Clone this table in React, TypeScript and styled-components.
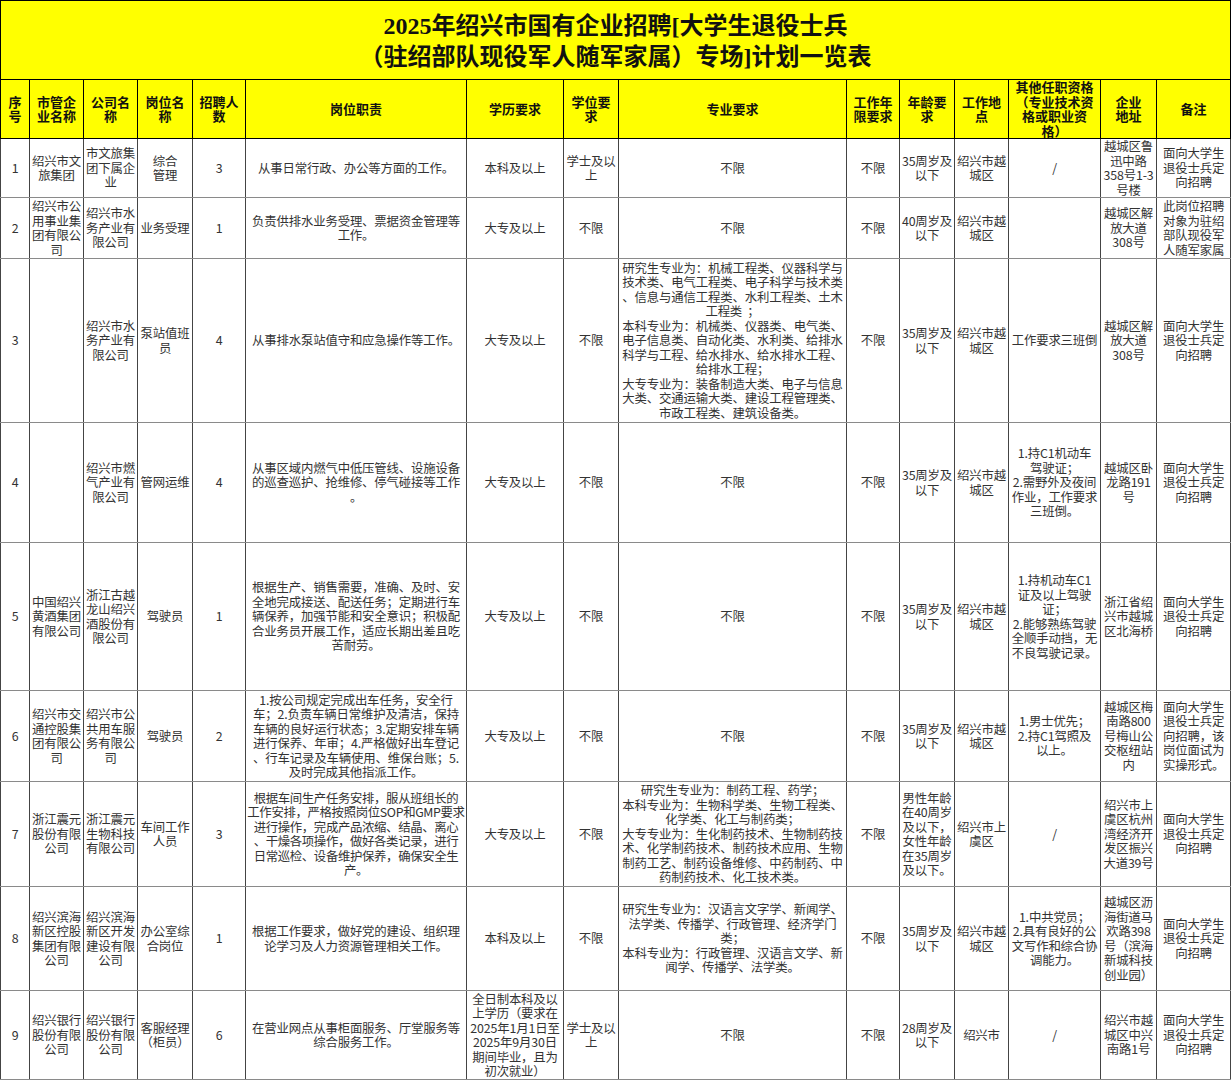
import React from "react";
import styled, { createGlobalStyle } from "styled-components";

const GlobalStyle = createGlobalStyle`
  html, body { margin: 0; padding: 0; background: #ffffff; }
  body { font-family: "Noto Sans CJK SC", "Noto Sans", sans-serif; }
`;

const Page = styled.div`
  width: 1232px;
  background: #ffffff;
`;

const Table = styled.table`
  width: 1230px;
  border-collapse: collapse;
  table-layout: fixed;
  font-family: "Noto Sans CJK SC", "Noto Sans", sans-serif;
`;

const TitleCell = styled.td`
  height: 75px;
  background: #ffff00;
  border: 1px solid #000;
  text-align: center;
  vertical-align: middle;
  font-family: "Liberation Serif", "Noto Sans CJK SC", serif;
  font-weight: 700;
  font-size: 24px;
  line-height: 31px;
  color: #111;
  padding: 3px 0 0 0;
`;

const HeadRow = styled.tr`
  height: 59px;
`;

const HeadCell = styled.th`
  background: #ffff00;
  border: 1px solid #000;
  text-align: center;
  vertical-align: middle;
  white-space: pre;
  font-weight: 700;
  font-size: 13px;
  line-height: 14.5px;
  color: #111;
  padding: 0;
`;

const BodyRow = styled.tr<{ $h: number }>`
  height: ${(p) => p.$h}px;
`;

const Cell = styled.td<{ $tight?: boolean }>`
  border-left: 1px solid #444;
  border-right: 1px solid #444;
  border-top: 1px solid #8a8a8a;
  border-bottom: 1px solid #8a8a8a;
  text-align: center;
  vertical-align: middle;
  white-space: pre;
  font-size: 12.4px;
  letter-spacing: ${(p) => (p.$tight ? "-0.35px" : "-0.15px")};
  line-height: 14.5px;
  color: #333;
  padding: 0;
  overflow: hidden;
`;

const widths = [29, 54, 54, 55, 53, 221, 97, 55, 228, 53, 55, 54, 92, 56, 74];

const headers = [
  "序\n号",
  "市管企\n业名称",
  "公司名\n称",
  "岗位名\n称",
  "招聘人\n数",
  "岗位职责",
  "学历要求",
  "学位要\n求",
  "专业要求",
  "工作年\n限要求",
  "年龄要\n求",
  "工作地\n点",
  "其他任职资格\n（专业技术资\n格或职业资\n格）",
  "企业\n地址",
  "备注",
];

const NOTE = "面向大学生\n退役士兵定\n向招聘";

const rows: { h: number; tight?: number; cells: string[] }[] = [
  {
    h: 59,
    cells: [
      "1",
      "绍兴市文\n旅集团",
      "市文旅集\n团下属企\n业",
      "综合\n管理",
      "3",
      "从事日常行政、办公等方面的工作。",
      "本科及以上",
      "学士及以\n上",
      "不限",
      "不限",
      "35周岁及\n以下",
      "绍兴市越\n城区",
      "/",
      "越城区鲁\n迅中路\n358号1-3\n号楼",
      NOTE,
    ],
  },
  {
    h: 61,
    cells: [
      "2",
      "绍兴市公\n用事业集\n团有限公\n司",
      "绍兴市水\n务产业有\n限公司",
      "业务受理",
      "1",
      "负责供排水业务受理、票据资金管理等\n工作。",
      "大专及以上",
      "不限",
      "不限",
      "不限",
      "40周岁及\n以下",
      "绍兴市越\n城区",
      "",
      "越城区解\n放大道\n308号",
      "此岗位招聘\n对象为驻绍\n部队现役军\n人随军家属",
    ],
  },
  {
    h: 164,
    cells: [
      "3",
      "",
      "绍兴市水\n务产业有\n限公司",
      "泵站值班\n员",
      "4",
      "从事排水泵站值守和应急操作等工作。",
      "大专及以上",
      "不限",
      "研究生专业为：机械工程类、仪器科学与\n技术类、电气工程类、电子科学与技术类\n、信息与通信工程类、水利工程类、土木\n工程类  ；\n本科专业为：机械类、仪器类、电气类、\n电子信息类、自动化类、水利类、给排水\n科学与工程、给水排水、给水排水工程、\n给排水工程；\n大专专业为：装备制造大类、电子与信息\n大类、交通运输大类、建设工程管理类、\n市政工程类、建筑设备类。",
      "不限",
      "35周岁及\n以下",
      "绍兴市越\n城区",
      "工作要求三班倒",
      "越城区解\n放大道\n308号",
      NOTE,
    ],
  },
  {
    h: 120,
    cells: [
      "4",
      "",
      "绍兴市燃\n气产业有\n限公司",
      "管网运维",
      "4",
      "从事区域内燃气中低压管线、设施设备\n的巡查巡护、抢维修、停气碰接等工作\n。",
      "大专及以上",
      "不限",
      "不限",
      "不限",
      "35周岁及\n以下",
      "绍兴市越\n城区",
      "1.持C1机动车\n驾驶证；\n2.需野外及夜间\n作业，工作要求\n三班倒。",
      "越城区卧\n龙路191\n号",
      NOTE,
    ],
  },
  {
    h: 148,
    cells: [
      "5",
      "中国绍兴\n黄酒集团\n有限公司",
      "浙江古越\n龙山绍兴\n酒股份有\n限公司",
      "驾驶员",
      "1",
      "根据生产、销售需要，准确、及时、安\n全地完成接送、配送任务；定期进行车\n辆保养，加强节能和安全意识；积极配\n合业务员开展工作，适应长期出差且吃\n苦耐劳。",
      "大专及以上",
      "不限",
      "不限",
      "不限",
      "35周岁及\n以下",
      "绍兴市越\n城区",
      "1.持机动车C1\n证及以上驾驶\n证；\n2.能够熟练驾驶\n全顺手动挡，无\n不良驾驶记录。",
      "浙江省绍\n兴市越城\n区北海桥",
      NOTE,
    ],
  },
  {
    h: 91,
    cells: [
      "6",
      "绍兴市交\n通控股集\n团有限公\n司",
      "绍兴市公\n共用车服\n务有限公\n司",
      "驾驶员",
      "2",
      "1.按公司规定完成出车任务，安全行\n车；2.负责车辆日常维护及清洁，保持\n车辆的良好运行状态；3.定期安排车辆\n进行保养、年审；4.严格做好出车登记\n、行车记录及车辆使用、维保台账；5.\n及时完成其他指派工作。",
      "大专及以上",
      "不限",
      "不限",
      "不限",
      "35周岁及\n以下",
      "绍兴市越\n城区",
      "1.男士优先；\n2.持C1驾照及\n以上。",
      "越城区梅\n南路800\n号梅山公\n交枢纽站\n内",
      "面向大学生\n退役士兵定\n向招聘，该\n岗位面试为\n实操形式。",
    ],
  },
  {
    h: 105,
    tight: 5,
    cells: [
      "7",
      "浙江震元\n股份有限\n公司",
      "浙江震元\n生物科技\n有限公司",
      "车间工作\n人员",
      "3",
      "根据车间生产任务安排，服从班组长的\n工作安排，严格按照岗位SOP和GMP要求\n进行操作，完成产品浓缩、结晶、离心\n、干燥各项操作，做好各类记录，进行\n日常巡检、设备维护保养，确保安全生\n产。",
      "大专及以上",
      "不限",
      "研究生专业为：制药工程、药学；\n本科专业为：生物科学类、生物工程类、\n化学类、化工与制药类；\n大专专业为：生化制药技术、生物制药技\n术、化学制药技术、制药技术应用、生物\n制药工艺、制药设备维修、中药制药、中\n药制药技术、化工技术类。",
      "不限",
      "男性年龄\n在40周岁\n及以下，\n女性年龄\n在35周岁\n及以下。",
      "绍兴市上\n虞区",
      "/",
      "绍兴市上\n虞区杭州\n湾经济开\n发区振兴\n大道39号",
      NOTE,
    ],
  },
  {
    h: 104,
    cells: [
      "8",
      "绍兴滨海\n新区控股\n集团有限\n公司",
      "绍兴滨海\n新区开发\n建设有限\n公司",
      "办公室综\n合岗位",
      "1",
      "根据工作要求，做好党的建设、组织理\n论学习及人力资源管理相关工作。",
      "本科及以上",
      "不限",
      "研究生专业为：汉语言文字学、新闻学、\n法学类、传播学、行政管理、经济学门\n类；\n本科专业为：行政管理、汉语言文学、新\n闻学、传播学、法学类。",
      "不限",
      "35周岁及\n以下",
      "绍兴市越\n城区",
      "1.中共党员；\n2.具有良好的公\n文写作和综合协\n调能力。",
      "越城区沥\n海街道马\n欢路398\n号（滨海\n新城科技\n创业园）",
      NOTE,
    ],
  },
  {
    h: 89,
    cells: [
      "9",
      "绍兴银行\n股份有限\n公司",
      "绍兴银行\n股份有限\n公司",
      "客服经理\n（柜员）",
      "6",
      "在营业网点从事柜面服务、厅堂服务等\n综合服务工作。",
      "全日制本科及以\n上学历（要求在\n2025年1月1日至\n2025年9月30日\n期间毕业，且为\n初次就业）",
      "学士及以\n上",
      "不限",
      "不限",
      "28周岁及\n以下",
      "绍兴市",
      "/",
      "绍兴市越\n城区中兴\n南路1号",
      NOTE,
    ],
  },
];

export default function App() {
  return (
    <Page>
      <GlobalStyle />
      <Table>
        <colgroup>
          {widths.map((w, i) => (
            <col key={i} style={{ width: w }} />
          ))}
        </colgroup>
        <tbody>
          <tr>
            <TitleCell colSpan={15}>
              2025年绍兴市国有企业招聘[大学生退役士兵
              <br />
              （驻绍部队现役军人随军家属）专场]计划一览表
            </TitleCell>
          </tr>
          <HeadRow>
            {headers.map((h, i) => (
              <HeadCell key={i}>{h}</HeadCell>
            ))}
          </HeadRow>
          {rows.map((r, ri) => (
            <BodyRow key={ri} $h={r.h}>
              {r.cells.map((c, ci) => (
                <Cell key={ci} $tight={r.tight === ci}>
                  {c}
                </Cell>
              ))}
            </BodyRow>
          ))}
        </tbody>
      </Table>
    </Page>
  );
}
